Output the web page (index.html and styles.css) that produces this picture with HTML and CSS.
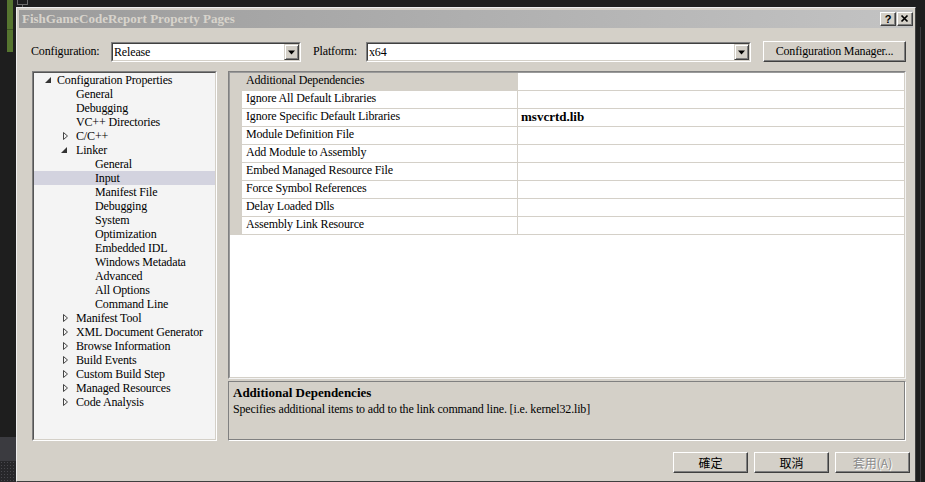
FILE: index.html
```html
<!DOCTYPE html>
<html>
<head>
<meta charset="utf-8">
<title>FishGameCodeReport Property Pages</title>
<link rel="stylesheet" href="styles.css">
</head>
<body>
<div class="strip-left">
  <div class="green"><div class="green-top"></div></div>
  <div class="strip-fill"></div>
  <div class="strip-gray"></div>
  <div class="strip-dots"></div>
</div>
<div class="main">
  <div class="topgap"><div class="tiny-box"></div><div class="tiny-stem"></div></div>
  <div class="dialog">
    <div class="titlebar">
      <span class="title">FishGameCodeReport Property Pages</span>
      <div class="tb-buttons">
        <div class="tb-btn help">?</div>
        <div class="tb-btn close"><svg width="14" height="12" viewBox="0 0 14 12"><path d="M3.5 2.5 L9.5 8.5 M9.5 2.5 L3.5 8.5" stroke="#000" stroke-width="1.7" fill="none"/></svg></div>
      </div>
    </div>
    <div class="client">
      <div class="cfg-row">
        <span class="lbl lbl-config">Configuration:</span>
        <div class="combo combo-config">
          <div class="combo-in">
            <span class="combo-text">Release</span>
            <div class="combo-arrow"><svg width="9" height="5" viewBox="0 0 9 5"><polygon points="1,0.5 8,0.5 4.5,4.5" fill="#000"/></svg></div>
          </div>
        </div>
        <span class="lbl lbl-platform">Platform:</span>
        <div class="combo combo-platform">
          <div class="combo-in">
            <span class="combo-text">x64</span>
            <div class="combo-arrow"><svg width="9" height="5" viewBox="0 0 9 5"><polygon points="1,0.5 8,0.5 4.5,4.5" fill="#000"/></svg></div>
          </div>
        </div>
        <div class="btn btn-cfgmgr">Configuration Manager...</div>
      </div>

      <div class="middle">
        <div class="tree">
          <div class="tree-inner">
            <div class="ti l0"><svg class="tw" width="16" height="14" viewBox="0 0 16 14"><polygon points="10,4 10,10 4,10" fill="#333"/></svg><span>Configuration Properties</span></div>
            <div class="ti l1"><span class="tw-empty"></span><span>General</span></div>
            <div class="ti l1"><span class="tw-empty"></span><span>Debugging</span></div>
            <div class="ti l1"><span class="tw-empty"></span><span>VC++ Directories</span></div>
            <div class="ti l1"><svg class="tw" width="16" height="14" viewBox="0 0 16 14"><polygon points="3.5,3.5 7.5,7 3.5,10.5" fill="none" stroke="#444" stroke-width="1"/></svg><span>C/C++</span></div>
            <div class="ti l1"><svg class="tw" width="16" height="14" viewBox="0 0 16 14"><polygon points="7,4 7,10 1,10" fill="#333"/></svg><span>Linker</span></div>
            <div class="ti l2"><span class="tw-empty"></span><span>General</span></div>
            <div class="ti l2 selected"><span class="tw-empty"></span><span>Input</span></div>
            <div class="ti l2"><span class="tw-empty"></span><span>Manifest File</span></div>
            <div class="ti l2"><span class="tw-empty"></span><span>Debugging</span></div>
            <div class="ti l2"><span class="tw-empty"></span><span>System</span></div>
            <div class="ti l2"><span class="tw-empty"></span><span>Optimization</span></div>
            <div class="ti l2"><span class="tw-empty"></span><span>Embedded IDL</span></div>
            <div class="ti l2"><span class="tw-empty"></span><span>Windows Metadata</span></div>
            <div class="ti l2"><span class="tw-empty"></span><span>Advanced</span></div>
            <div class="ti l2"><span class="tw-empty"></span><span>All Options</span></div>
            <div class="ti l2"><span class="tw-empty"></span><span>Command Line</span></div>
            <div class="ti l1"><svg class="tw" width="16" height="14" viewBox="0 0 16 14"><polygon points="3.5,3.5 7.5,7 3.5,10.5" fill="none" stroke="#444" stroke-width="1"/></svg><span>Manifest Tool</span></div>
            <div class="ti l1"><svg class="tw" width="16" height="14" viewBox="0 0 16 14"><polygon points="3.5,3.5 7.5,7 3.5,10.5" fill="none" stroke="#444" stroke-width="1"/></svg><span>XML Document Generator</span></div>
            <div class="ti l1"><svg class="tw" width="16" height="14" viewBox="0 0 16 14"><polygon points="3.5,3.5 7.5,7 3.5,10.5" fill="none" stroke="#444" stroke-width="1"/></svg><span>Browse Information</span></div>
            <div class="ti l1"><svg class="tw" width="16" height="14" viewBox="0 0 16 14"><polygon points="3.5,3.5 7.5,7 3.5,10.5" fill="none" stroke="#444" stroke-width="1"/></svg><span>Build Events</span></div>
            <div class="ti l1"><svg class="tw" width="16" height="14" viewBox="0 0 16 14"><polygon points="3.5,3.5 7.5,7 3.5,10.5" fill="none" stroke="#444" stroke-width="1"/></svg><span>Custom Build Step</span></div>
            <div class="ti l1"><svg class="tw" width="16" height="14" viewBox="0 0 16 14"><polygon points="3.5,3.5 7.5,7 3.5,10.5" fill="none" stroke="#444" stroke-width="1"/></svg><span>Managed Resources</span></div>
            <div class="ti l1"><svg class="tw" width="16" height="14" viewBox="0 0 16 14"><polygon points="3.5,3.5 7.5,7 3.5,10.5" fill="none" stroke="#444" stroke-width="1"/></svg><span>Code Analysis</span></div>
          </div>
        </div>

        <div class="right-col">
          <div class="grid">
            <div class="grid-inner">
              <div class="gr selected"><div class="gut"></div><div class="gn">Additional Dependencies</div><div class="gv"></div></div>
              <div class="gr"><div class="gut"></div><div class="gn">Ignore All Default Libraries</div><div class="gv"></div></div>
              <div class="gr"><div class="gut"></div><div class="gn">Ignore Specific Default Libraries</div><div class="gv bold">msvcrtd.lib</div></div>
              <div class="gr"><div class="gut"></div><div class="gn">Module Definition File</div><div class="gv"></div></div>
              <div class="gr"><div class="gut"></div><div class="gn">Add Module to Assembly</div><div class="gv"></div></div>
              <div class="gr"><div class="gut"></div><div class="gn">Embed Managed Resource File</div><div class="gv"></div></div>
              <div class="gr"><div class="gut"></div><div class="gn">Force Symbol References</div><div class="gv"></div></div>
              <div class="gr"><div class="gut"></div><div class="gn">Delay Loaded Dlls</div><div class="gv"></div></div>
              <div class="gr"><div class="gut"></div><div class="gn">Assembly Link Resource</div><div class="gv"></div></div>
            </div>
          </div>
          <div class="desc">
            <div class="desc-title">Additional Dependencies</div>
            <div class="desc-text">Specifies additional items to add to the link command line. [i.e. kernel32.lib]</div>
          </div>
        </div>
      </div>

      <div class="btn-row">
        <div class="btn btn-dlg">確定</div>
        <div class="btn btn-dlg">取消</div>
        <div class="btn btn-dlg disabled">套用(A)</div>
      </div>
    </div>
  </div>
</div>
<div class="strip-right"><div class="vline"></div></div>
</body>
</html>
```

FILE: styles.css
```css
* { box-sizing: border-box; }
html, body { margin: 0; padding: 0; }
body {
  width: 925px;
  height: 482px;
  overflow: hidden;
  background: #1e1e1e;
  display: flex;
  font-family: "Liberation Serif", "Noto Sans CJK TC", serif;
  font-size: 12px;
  letter-spacing: -0.15px;
  color: #000;
}

/* surrounding editor background */
.strip-left { width: 16px; display: flex; flex-direction: column; }
.green { margin-left: 7px; width: 6px; height: 52px; background: #56752f; }
.green-top { height: 30px; border-bottom: 1px solid #3e5522; }
.strip-fill { flex: 1; }
.strip-gray { height: 24px; background: #3b3b40; }
.strip-dots {
  height: 21px;
  background: radial-gradient(circle, #48484d 0.7px, transparent 0.9px) 0 0 / 3px 3px, #27272a;
}
.strip-right { width: 9px; display: flex; flex-direction: column; }
.vline { margin: 27px 0 0 4px; width: 1px; flex: 1; background: #3e3e42; }

.main { width: 900px; display: flex; flex-direction: column; }
.topgap { height: 7px; display: flex; flex-direction: column; }
.tiny-box { margin-left: 1px; width: 11px; height: 5px; border: 1px solid #6e6e6e; border-top: none; }
.tiny-stem { margin-left: 6px; width: 1px; height: 2px; background: #6e6e6e; }

/* dialog */
.dialog {
  flex: 1;
  background: #d4d0c8;
  border: 1px solid;
  border-color: #eeeeee #404040 #404040 #eeeeee;
  padding: 2px;
  display: flex;
  flex-direction: column;
}
.titlebar {
  height: 18px;
  display: flex;
  align-items: center;
  background: linear-gradient(to right, #9b9b9b, #c3c3c3);
}
.title {
  padding-left: 3px;
  font-weight: bold;
  font-size: 13px;
  letter-spacing: 0;
  color: #d8d4cc;
}
.tb-buttons { margin-left: auto; display: flex; gap: 1px; }
.tb-btn {
  width: 16px;
  height: 14px;
  background: #d4d0c8;
  border: 1px solid;
  border-color: #ffffff #404040 #404040 #ffffff;
  box-shadow: inset -1px -1px 0 #808080;
  display: flex;
  align-items: center;
  justify-content: center;
}
.help {
  font-family: "Liberation Sans", sans-serif;
  font-weight: bold;
  font-size: 11px;
  line-height: 12px;
}

.client {
  flex: 1;
  padding: 13px 7px 0 13px;
  display: flex;
  flex-direction: column;
}

/* configuration row */
.cfg-row { height: 21px; display: flex; align-items: flex-start; }
.lbl { line-height: 21px; white-space: nowrap; }
.lbl-config { width: 80px; margin-left: -1px; }
.lbl-platform { width: 53px; margin-left: 12px; }
.combo {
  margin-top: 1px;
  height: 20px;
  border: 1px solid;
  border-color: #808080 #ffffff #ffffff #808080;
  display: flex;
}
.combo-config { width: 190px; }
.combo-platform { width: 385px; }
.combo-in {
  flex: 1;
  background: #ffffff;
  border: 1px solid;
  border-color: #404040 #d4d0c8 #d4d0c8 #404040;
  display: flex;
  align-items: center;
}
.combo-text { padding-left: 1px; line-height: 16px; }
.combo-arrow {
  margin-left: auto;
  width: 15px;
  height: 16px;
  background: #d4d0c8;
  border: 1px solid;
  border-color: #d4d0c8 #404040 #404040 #d4d0c8;
  box-shadow: inset 1px 1px 0 #ffffff, inset -1px -1px 0 #808080;
  display: flex;
  align-items: center;
  justify-content: center;
}

.btn {
  background: #d4d0c8;
  border: 1px solid;
  border-color: #ffffff #404040 #404040 #ffffff;
  box-shadow: inset -1px -1px 0 #808080;
  display: flex;
  align-items: center;
  justify-content: center;
  white-space: nowrap;
}
.btn-cfgmgr { margin-left: 12px; width: 143px; height: 21px; }

/* middle section */
.middle { margin-top: 9px; height: 370px; display: flex; gap: 11px; }
.tree {
  width: 185px;
  border: 1px solid;
  border-color: #808080 #ffffff #ffffff #808080;
  display: flex;
}
.tree-inner {
  flex: 1;
  background: #f4f4f4;
  border: 1px solid;
  border-color: #555555 #d4d0c8 #d4d0c8 #555555;
}
.ti { height: 14px; line-height: 14px; display: flex; align-items: center; white-space: nowrap; }
.ti .tw, .ti .tw-empty { width: 16px; height: 14px; flex: none; display: block; }
.l0 { padding-left: 7px; }
.l1 { padding-left: 26px; }
.l2 { padding-left: 45px; }
.ti.selected { background: #d3d3df; }

.right-col { width: 678px; display: flex; flex-direction: column; gap: 2px; }
.grid {
  height: 309px;
  border: 1px solid;
  border-color: #808080 #f4f4f4 #f4f4f4 #808080;
  display: flex;
}
.grid-inner {
  flex: 1;
  background: #ffffff;
  border: 1px solid;
  border-color: #9a9a9a #d4d0c8 #d4d0c8 #9a9a9a;
}
.gr { height: 18px; display: flex; }
.gut { width: 12px; background: #d4d0c8; }
.gn {
  width: 275px;
  padding-left: 4px;
  line-height: 15px;
  border-bottom: 1px solid #d4d0c8;
  white-space: nowrap;
}
.gr.selected .gn { background: #d4d0c8; }
.gv {
  flex: 1;
  padding-left: 3px;
  line-height: 15px;
  border-left: 1px solid #d4d0c8;
  border-bottom: 1px solid #d4d0c8;
}
.bold { font-weight: bold; font-size: 13px; letter-spacing: 0; }

.desc {
  height: 60px;
  border: 1px solid;
  border-color: #808080 #ffffff #ffffff #808080;
  box-shadow: inset -1px -1px 0 #808080;
  padding: 2px 0 0 4px;
}
.desc-title { font-weight: bold; font-size: 13px; letter-spacing: 0; line-height: 17px; }
.desc-text { line-height: 17px; }

/* dialog buttons */
.btn-row {
  margin-top: 11px;
  margin-right: -4px;
  display: flex;
  justify-content: flex-end;
  gap: 6px;
}
.btn-dlg {
  width: 75px;
  height: 21px;
  font-family: "Noto Sans CJK TC", "Liberation Sans", sans-serif;
  font-size: 12px;
  letter-spacing: 0;
}
.btn-dlg.disabled { color: #8c8c8c; text-shadow: 1px 1px 0 #ffffff; }
```
